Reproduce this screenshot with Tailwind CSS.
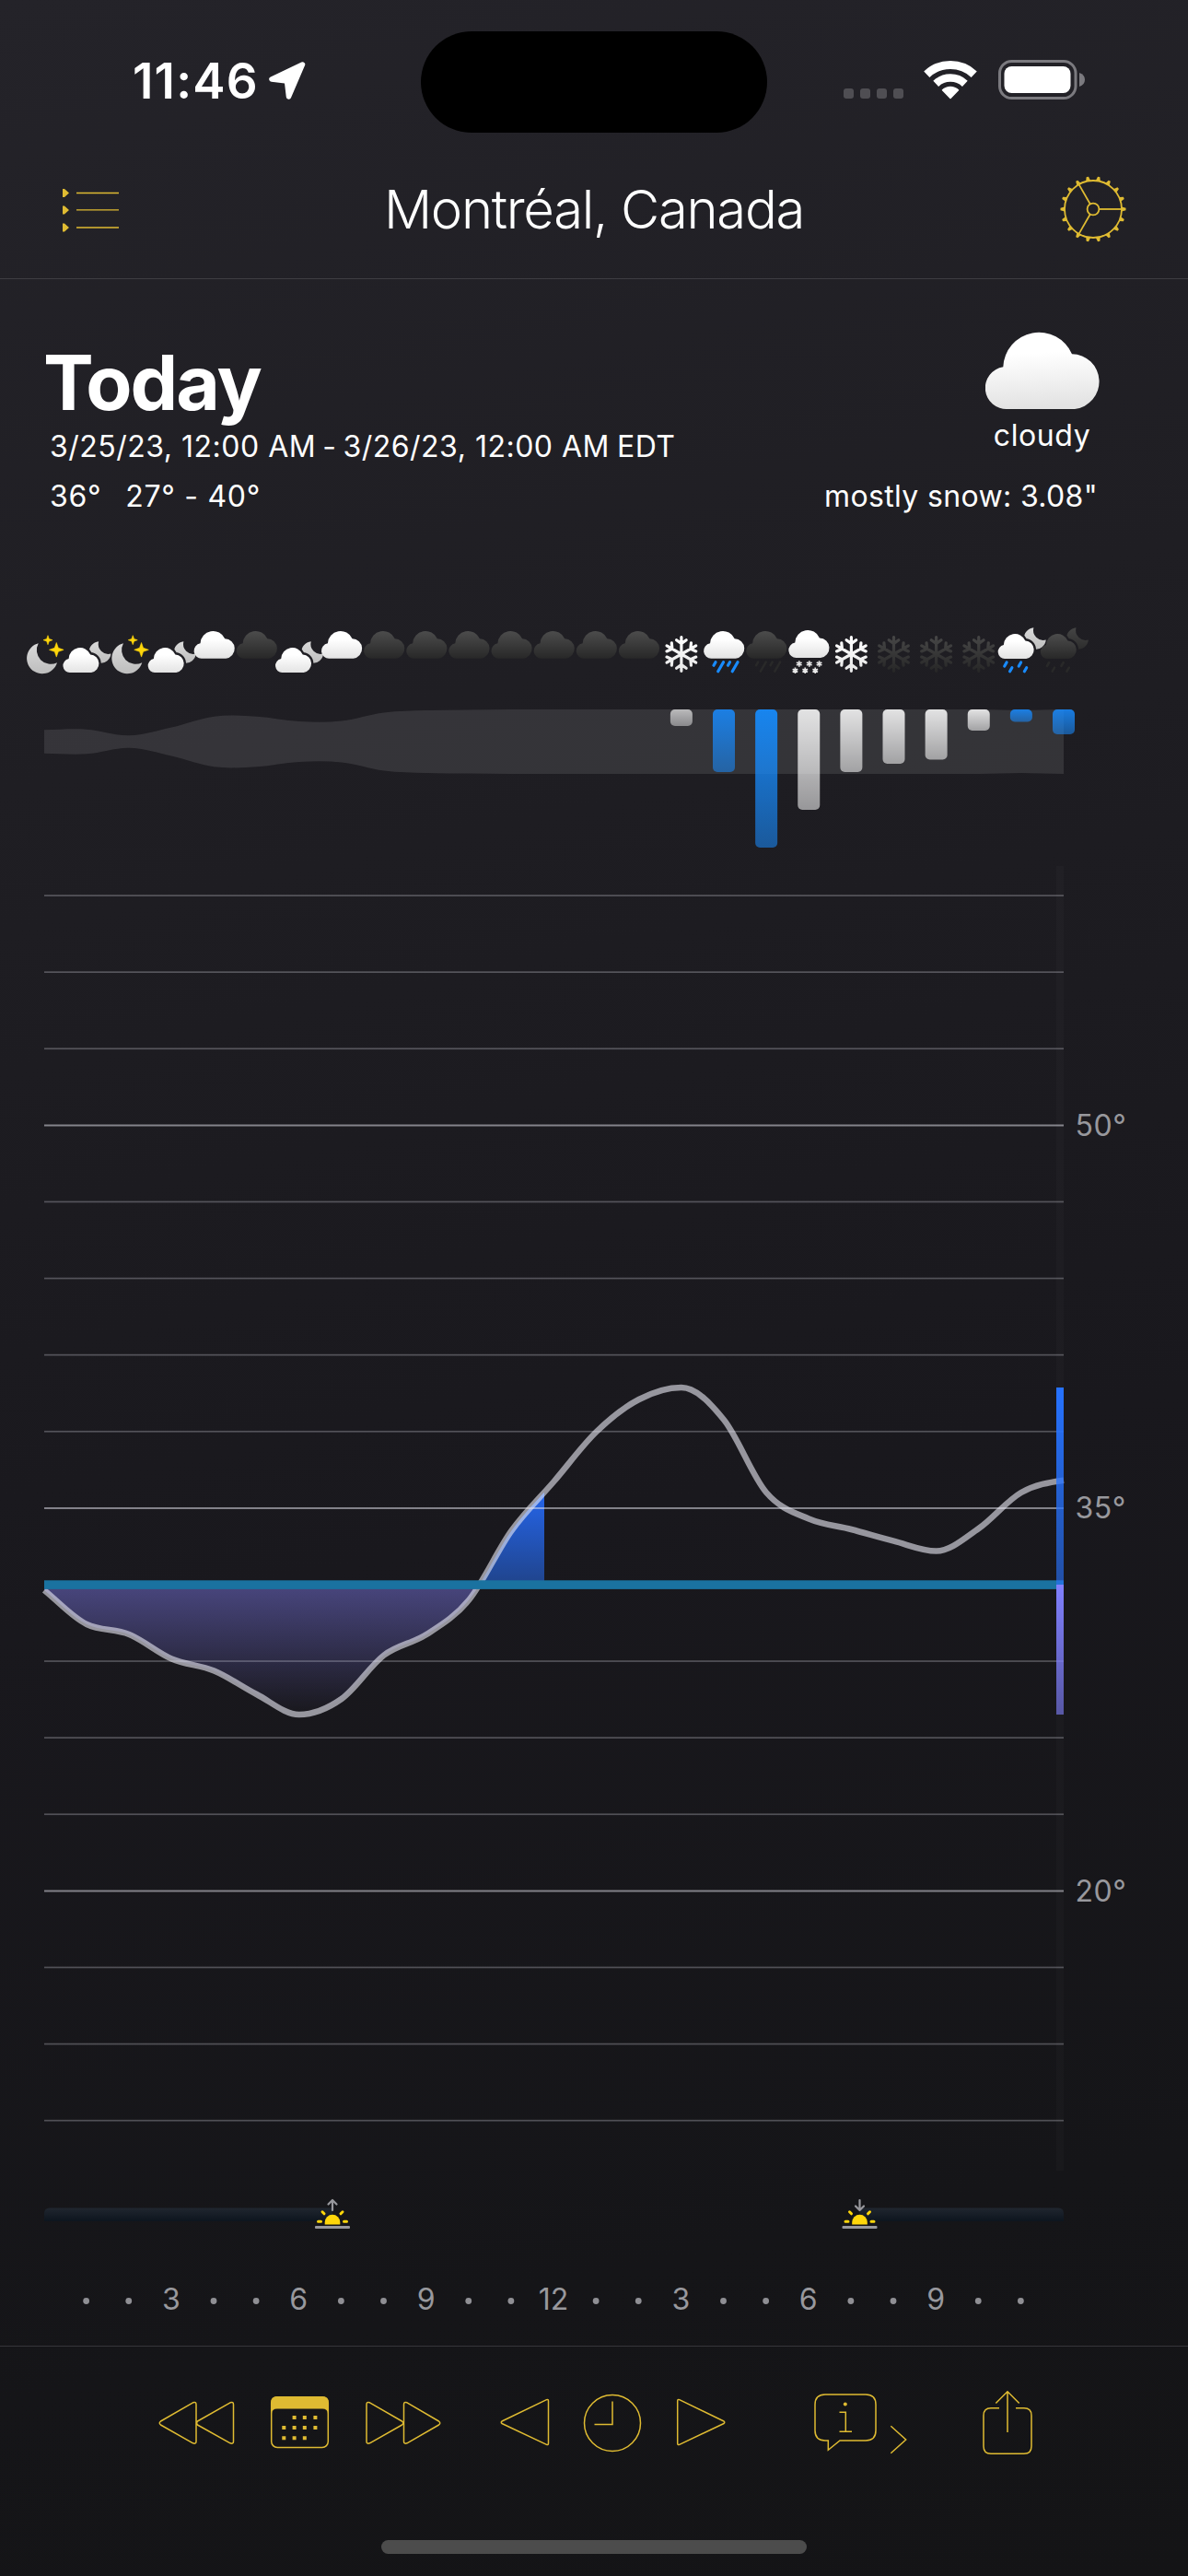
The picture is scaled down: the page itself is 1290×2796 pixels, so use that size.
<!DOCTYPE html>
<html lang="en">
<head>
<meta charset="utf-8">
<title>Montréal, Canada – Forecast</title>
<script src="https://cdn.jsdelivr.net/npm/@tailwindcss/browser@4"></script>
</head>
<body class="bg-[#141417]">
<div class="flex h-[2796px] w-[1290px] flex-col overflow-hidden bg-[linear-gradient(168deg,#242329_0%,#1f1e23_28%,#19181d_58%,#151518_85%,#141416_100%)] font-['Inter',sans-serif] text-white">

  <!-- Status bar -->
  <div class="grid h-[152px] shrink-0 grid-cols-[457px_376px_457px]">
    <div class="flex items-start pt-[58px] pl-[144px]">
      <span class="text-[53px] leading-[60px] font-semibold tracking-[1.200px] whitespace-nowrap">11:46</span>
      <svg class="mt-[8px] ml-[9px] h-[44px] w-[44px]" viewBox="0 0 44 44"><path d="M38.5 4 L5 20 L21.500 22 L23.500 39 Z" fill="#fff" stroke="#fff" stroke-width="5.500" stroke-linejoin="round"/></svg>
    </div>
    <div class="mt-[34px] h-[110px] rounded-full bg-black"></div>
    <div class="flex items-start pt-[65px] pl-[83px]">
      <div class="mt-[31px] flex gap-[7px]">
        <div class="h-[11px] w-[11px] rounded-[3px] bg-[#4f4e53]"></div>
        <div class="h-[11px] w-[11px] rounded-[3px] bg-[#4f4e53]"></div>
        <div class="h-[11px] w-[11px] rounded-[3px] bg-[#4f4e53]"></div>
        <div class="h-[11px] w-[11px] rounded-[3px] bg-[#4f4e53]"></div>
      </div>
      <svg class="ml-[21px] h-[43px] w-[60px]" viewBox="0 0 60 43" fill="none" stroke="#fff">
        <path d="M4.300 15.700 A37.700 37.700 0 0 1 55.700 15.700" stroke-width="9"/>
        <path d="M14.200 25.800 A23.200 23.200 0 0 1 45.800 25.800" stroke-width="8.500"/>
        <path d="M30 41.500 L21.500 32.800 A12.500 12.500 0 0 1 38.500 32.800 Z" fill="#fff" stroke-width="1.500" stroke-linejoin="round"/>
      </svg>
      <svg class="ml-[22px] h-[43px] w-[96px]" viewBox="0 0 96 43">
        <rect x="1.500" y="1.500" width="82.500" height="40" rx="13" fill="none" stroke="#7b7a7f" stroke-width="3"/>
        <rect x="6.500" y="7" width="72" height="29" rx="8" fill="#fff"/>
        <path d="M88 14 Q94 16 94 21.500 Q94 27 88 29 Z" fill="#7b7a7f"/>
      </svg>
    </div>
  </div>

  <!-- Navigation bar -->
  <div class="flex h-[151px] shrink-0 items-center justify-between border-b border-[#3e3d42] pr-[64px] pl-[66px]">
    <svg class="h-[50px] w-[76px]" viewBox="0 0 76 50" fill="#dfbb32">
      <path d="M2 3 H4 L9 7.500 L4 12 H2 Z M2 21.500 H4 L9 26 L4 30.500 H2 Z M2 40.500 H4 L9 45 L4 49.500 H2 Z"/>
      <path d="M17 6.800 H63 V8.200 H17 Z M17 25.200 H63 V26.600 H17 Z M17 44.200 H63 V45.800 H17 Z"/>
    </svg>
    <h1 class="text-[58px] leading-[70px] font-light tracking-[-1.300px] whitespace-nowrap">Montréal, Canada</h1>
    <svg id="gear" class="h-[78px] w-[78px]" viewBox="-39 -39 78 78" fill="none" stroke="#dfbb32" stroke-width="1.800"></svg>
  </div>

  <!-- Day summary -->
  <div class="flex h-[317px] shrink-0 justify-between pr-[98px] pl-[50px]">
    <div class="flex flex-col pt-[68px]">
      <h2 class="-ml-[3px] text-[82px] leading-[90px] font-bold tracking-[-2px]">Today</h2>
      <p class="mt-[4px] ml-[4px] text-[32px] leading-[40px] tracking-[0.500px] whitespace-nowrap">3/25/23, 12:00 AM<span class="mx-[7px]">-</span>3/26/23, 12:00 AM<span class="ml-[8px]">EDT</span></p>
      <p class="mt-[14px] ml-[4px] flex gap-[26px] text-[32px] leading-[40px] tracking-[0.700px]"><span>36°</span><span>27° - 40°</span></p>
    </div>
    <div class="flex flex-col items-end pt-[57px]">
      <div class="-mr-[7px] flex w-[130px] flex-col items-center">
        <svg class="h-[85px] w-[128px]" viewBox="-1 -1 128 85">
          <defs><linearGradient id="bigCloud" x1="0" y1="0" x2="0.08" y2="1"><stop offset="0.3" stop-color="#fff"/><stop offset="1" stop-color="#e3e3e3"/></linearGradient></defs>
          <path d="M23 83 A23 23 0 0 1 18.300 37.300 A39 39 0 0 1 93 23.200 A30 30 0 0 1 96 83 Z" fill="url(#bigCloud)"/>
        </svg>
        <p class="mt-[8px] mr-[5px] text-[32px] leading-[40px] tracking-[0.600px]">cloudy</p>
      </div>
      <p class="mt-[26px] text-[32px] leading-[40px] tracking-[0.350px] whitespace-nowrap">mostly snow: 3.08"</p>
    </div>
  </div>

  <!-- Hourly chart -->
  <svg id="chart" class="h-[1926px] w-[1290px] shrink-0" viewBox="0 620 1290 1926" font-size="32">
    <defs>
      <linearGradient id="cloudLight" x1="0" y1="0" x2="0" y2="1"><stop offset="0.3" stop-color="#fff"/><stop offset="1" stop-color="#e3e3e3"/></linearGradient>
      <linearGradient id="cloudDark" x1="0" y1="0" x2="0" y2="1"><stop offset="0" stop-color="#4c4c4c"/><stop offset="1" stop-color="#282828"/></linearGradient>
      <linearGradient id="moonLight" x1="0" y1="0" x2="0" y2="1"><stop offset="0" stop-color="#dadada"/><stop offset="1" stop-color="#bdbdbd"/></linearGradient>
      <linearGradient id="moonDark" x1="0" y1="0" x2="0" y2="1"><stop offset="0" stop-color="#454545"/><stop offset="1" stop-color="#2c2c2c"/></linearGradient>
      <linearGradient id="flakeLight" gradientUnits="userSpaceOnUse" x1="0" y1="-20" x2="0" y2="20"><stop offset="0" stop-color="#fff"/><stop offset="1" stop-color="#e6e6e6"/></linearGradient>
      <linearGradient id="flakeDark" gradientUnits="userSpaceOnUse" x1="0" y1="-20" x2="0" y2="20"><stop offset="0" stop-color="#474747"/><stop offset="1" stop-color="#262626"/></linearGradient>
      <linearGradient id="barSnow" x1="0" y1="0" x2="0" y2="1"><stop offset="0" stop-color="#fff" stop-opacity="0.86"/><stop offset="1" stop-color="#fff" stop-opacity="0.54"/></linearGradient>
      <linearGradient id="barTrace" x1="0" y1="0" x2="0" y2="1"><stop offset="0" stop-color="#fff" stop-opacity="0.66"/><stop offset="1" stop-color="#fff" stop-opacity="0.42"/></linearGradient>
      <linearGradient id="barRain" x1="0" y1="0" x2="0" y2="1"><stop offset="0" stop-color="#1689f8" stop-opacity="0.95"/><stop offset="1" stop-color="#188bff" stop-opacity="0.55"/></linearGradient>
      <linearGradient id="barDrizzle" x1="0" y1="0" x2="0" y2="1"><stop offset="0" stop-color="#188bff" stop-opacity="0.86"/><stop offset="1" stop-color="#188bff" stop-opacity="0.54"/></linearGradient>
      <linearGradient id="warm" gradientUnits="userSpaceOnUse" x1="0" y1="1506" x2="0" y2="1720"><stop offset="0" stop-color="#2672ff"/><stop offset="1" stop-color="#2672ff" stop-opacity="0.6"/></linearGradient>
      <linearGradient id="cold" gradientUnits="userSpaceOnUse" x1="0" y1="1720" x2="0" y2="1861"><stop offset="0" stop-color="#8080ff"/><stop offset="1" stop-color="#8080ff" stop-opacity="0.6"/></linearGradient>
      <linearGradient id="warmFill" gradientUnits="userSpaceOnUse" x1="0" y1="1620" x2="0" y2="1716"><stop offset="0" stop-color="#2565ea"/><stop offset="1" stop-color="#20458f"/></linearGradient>
      <linearGradient id="coldFill" gradientUnits="userSpaceOnUse" x1="0" y1="1720" x2="0" y2="1861"><stop offset="0" stop-color="#807cf0" stop-opacity="0.46"/><stop offset="1" stop-color="#807cf0" stop-opacity="0"/></linearGradient>
      <linearGradient id="night" x1="0" y1="0" x2="0" y2="1"><stop offset="0" stop-color="#20262f"/><stop offset="1" stop-color="#0d151e"/></linearGradient>
      <mask id="behindCloud" maskUnits="userSpaceOnUse" x="-10" y="-10" width="80" height="70"><rect x="-10" y="-10" width="80" height="70" fill="#fff"/><path transform="translate(0 7) scale(.315 .325)" d="M23 83 A23 23 0 0 1 18.300 37.300 A39 39 0 0 1 93 23.200 A30 30 0 0 1 96 83 Z" fill="#000" stroke="#000" stroke-width="15"/></mask>
      <clipPath id="belowFreezing"><rect x="48" y="1720" width="560" height="160"/></clipPath>
      <clipPath id="aboveFreezing"><rect x="480" y="1500" width="111" height="220"/></clipPath>
    </defs>
  </svg>

  <!-- Toolbar -->
  <div class="flex h-[250px] shrink-0 flex-col items-center border-t border-[#36353a]">
    <div class="flex h-[166px] w-full items-center pl-[171px]">
      <svg class="h-[80px] w-[85px]" viewBox="171 2589 85 80" fill="none" stroke="#dfbb32" stroke-width="1.500" stroke-linejoin="round"><path d="M174.500 2627 L209.500 2606.800 Q213 2605.500 213 2609 V2649 Q213 2652 209.500 2650.800 L174.500 2631 Q172 2629 174.500 2627 Z M214.500 2627 L250 2606.800 Q253.500 2605.500 253.500 2609 V2649 Q253.500 2652 250 2650.800 L214.500 2631 Q212.500 2629 214.500 2627 Z"/></svg>
      <svg class="ml-[36px] h-[80px] w-[67px]" viewBox="292 2589 67 80" fill="#dfbb32"><rect x="294.700" y="2600.700" width="61.600" height="54.800" rx="6.500" fill="none" stroke="#dfbb32" stroke-width="1.500"/><path d="M294 2619 V2607 Q294 2600 301 2600 H350 Q357 2600 357 2607 V2619 H356 Q356 2613.500 350 2613.500 H301 Q295 2613.500 295 2619 Z"/><path d="M317.600 2621 h4 v4 h-4 Z M328.800 2621 h4 v4 h-4 Z M340.400 2621 h4 v4 h-4 Z M306.300 2632 h4 v4 h-4 Z M317.600 2632 h4 v4 h-4 Z M328.800 2632 h4 v4 h-4 Z M340.400 2632 h4 v4 h-4 Z M306.300 2643.200 h4 v4 h-4 Z M317.600 2643.200 h4 v4 h-4 Z M328.800 2643.200 h4 v4 h-4 Z"/></svg>
      <svg class="ml-[36px] h-[80px] w-[86px]" viewBox="395 2589 86 80" fill="none" stroke="#dfbb32" stroke-width="1.500" stroke-linejoin="round"><path d="M436.500 2627 L401.500 2606.800 Q398 2605.500 398 2609 V2649 Q398 2652 401.500 2650.800 L436.500 2631 Q439 2629 436.500 2627 Z M476.500 2627 L442 2606.800 Q438.500 2605.500 438.500 2609 V2649 Q438.500 2652 442 2650.800 L476.500 2631 Q479 2629 476.500 2627 Z"/></svg>
      <svg class="ml-[61px] h-[80px] w-[56px]" viewBox="542 2589 56 80" fill="none" stroke="#dfbb32" stroke-width="1.500" stroke-linejoin="round"><path d="M545 2627 L593.500 2603.600 Q595.500 2603 595.500 2605 V2651 Q595.500 2653 593.500 2652.400 L545 2629.500 Q543.500 2628.200 545 2627 Z"/></svg>
      <svg class="ml-[34px] h-[80px] w-[66px]" viewBox="632 2589 66 80" fill="none" stroke="#dfbb32" stroke-width="1.500"><circle cx="665" cy="2629" r="30.500"/><path d="M665 2605.500 V2630.500 H645.500"/></svg>
      <svg class="ml-[35px] h-[80px] w-[56px]" viewBox="733 2589 56 80" fill="none" stroke="#dfbb32" stroke-width="1.500" stroke-linejoin="round"><path d="M786 2627 L737.700 2603.600 Q735.700 2603 735.700 2605 V2651 Q735.700 2653 737.700 2652.400 L786 2629.500 Q787.500 2628.200 786 2627 Z"/></svg>
      <svg class="ml-[93px] h-[80px] w-[106px]" viewBox="882 2589 106 80" fill="none" stroke="#dfbb32" stroke-width="1.500"><path d="M896 2598 H940 Q951 2598 951 2609 V2637 Q951 2648 940 2648 H912 L899.300 2658.300 V2648 H896 Q885 2648 885 2637 V2609 Q885 2598 896 2598 Z"/><path d="M911.500 2617.300 H918.300 V2638.300 M911.500 2638.300 H925"/><circle cx="917.800" cy="2608.500" r="2" fill="#dfbb32" stroke="none"/><path d="M967.300 2632.300 L983.700 2647 L967.300 2661.800"/></svg>
      <svg class="ml-[77px] h-[80px] w-[58px]" viewBox="1065 2589 58 80" fill="none" stroke="#dfbb32" stroke-width="1.500"><path d="M1085 2612.700 H1076 Q1068 2612.700 1068 2620.700 V2654.300 Q1068 2662.300 1076 2662.300 H1112 Q1120 2662.300 1120 2654.300 V2620.700 Q1120 2612.700 1112 2612.700 H1103 M1094 2639 V2595 M1081.300 2607.500 L1094 2594.800 L1106.700 2607.500"/></svg>
    </div>
    <div class="mt-[44px] h-[15px] w-[462px] rounded-full bg-[#4c4c4c]"></div>
  </div>
</div>

<script type="module">
  // Gear: ring, hub, three spokes and eighteen teeth
  const gear = ['<circle r="31"/><circle r="6.400"/>'];
  for (const a of [0, 120, 240]) gear.push(`<path transform="rotate(${a})" d="M6.400 0 H31"/>`);
  for (let i = 0; i < 18; i++) gear.push(`<path transform="rotate(${i * 20})" d="M31 -2.500 L35.500 -1.200 V1.200 L31 2.500 Z" fill="#dfbb32" stroke="none"/>`);
  document.getElementById('gear').innerHTML = gear.join('');

  const X0 = 48, STEP = 46.125;
  const hx = h => X0 + STEP * h;
  const out = [];

  // Cubic through the hourly samples; monotone keeps extremes at the samples
  function curve(ys, monotone) {
    const n = ys.length, s = [], m = [];
    for (let i = 0; i < n - 1; i++) s.push(ys[i + 1] - ys[i]);
    for (let i = 0; i < n; i++) {
      if (i === 0) m.push(s[0]);
      else if (i === n - 1) m.push(s[n - 2] * 0.5);
      else {
        const a = s[i - 1], b = s[i];
        if (!monotone) m.push((a + b) / 2);
        else m.push(a * b <= 0 ? 0 : Math.sign(a) * Math.min(Math.abs(a + b) / 2, 2 * Math.abs(a), 2 * Math.abs(b)));
      }
    }
    let d = '';
    for (let i = 0; i < n - 1; i++)
      d += `C${hx(i) + STEP / 3} ${ys[i] + m[i] / 3} ${hx(i + 1) - STEP / 3} ${ys[i + 1] - m[i + 1] / 3} ${hx(i + 1)} ${ys[i + 1]}`;
    return d;
  }
  // Same curve walked right to left, for the lower edge of the band
  function reversed(ys) {
    const c = curve(ys, false).slice(1).split('C').map(p => p.split(' ').map(Number));
    let d = '';
    for (let i = c.length - 1; i >= 0; i--) {
      const [ax, ay, bx, by] = c[i];
      d += `C${bx} ${by} ${ax} ${ay} ${hx(i)} ${ys[i]}`;
    }
    return d;
  }

  // Cloud cover band
  const cover = [12.8, 13.3, 6.700, 15.500, 27.300, 27.300, 22, 22.500, 31.500, 34, 34.600, 35, 35, 35, 35, 35, 35, 35, 35, 35, 35, 35, 35, 34, 35];
  const upper = cover.map(v => 805 - v), lower = cover.map(v => 805 + v);
  out.push(`<path d="M${X0} ${upper[0]}${curve(upper, false)}L${hx(24)} ${lower[24]}${reversed(lower)}Z" fill="#fff" fill-opacity="0.1"/>`);

  // Precipitation bars
  const bars = [[15, 18, 'barTrace'], [16, 68, 'barDrizzle'], [17, 150, 'barRain'], [18, 109, 'barSnow'], [19, 68, 'barSnow'], [20, 59, 'barSnow'], [21, 54.500, 'barSnow'], [22, 23, 'barSnow'], [23, 13.500, 'barDrizzle'], [24, 27, 'barDrizzle']];
  for (const [h, len, g] of bars)
    out.push(`<rect x="${hx(h) - 12}" y="770" width="24" height="${len}" rx="5" fill="url(#${g})"/>`);

  // Condition icons
  const CLOUD = 'M23 83 A23 23 0 0 1 18.300 37.300 A39 39 0 0 1 93 23.200 A30 30 0 0 1 96 83 Z';
  const cloud = (x, y, sx, sy, dark) => `<path transform="translate(${x} ${y}) scale(${sx} ${sy})" d="${CLOUD}" fill="url(#${dark ? 'cloudDark' : 'cloudLight'})"/>`;
  const fullCloud = (x, dark) => cloud(x - 22.500, 685, 0.357, 0.357, dark);
  const star = (x, y, r) => {
    const k = r * 0.26;
    return `<path d="M${x} ${y - r}L${x + k} ${y - k}L${x + r} ${y}L${x + k} ${y + k}L${x} ${y + r}L${x - k} ${y + k}L${x - r} ${y}L${x - k} ${y - k}Z" fill="#ffd60a" stroke="#ffd60a" stroke-width="0.600" stroke-linejoin="round"/>`;
  };
  const drops = (list, color, w) => list.map(([x, y, l]) => `<path d="M${x} ${y}L${x - l * 0.580} ${y + l}" stroke="${color}" stroke-width="${w}" stroke-linecap="round"/>`).join('');
  const moonCloud = (x, y, dark) => `<g transform="translate(${x - 26.300} ${y})"><g mask="url(#behindCloud)"><path transform="translate(27.500 0)" d="M10.800 0.200 A12 12 0 1 0 24.200 13.400 A10.800 10.800 0 0 1 10.800 0.200 Z" fill="url(#${dark ? 'moonDark' : 'moonLight'})"/></g>${cloud(0, 7, 0.315, 0.325, dark)}</g>`;
  const flake = (x, y, dark) => {
    let d = '';
    for (let i = 0; i < 6; i++) {
      const t = i * Math.PI / 3, p = (a, b) => `${(a * Math.cos(t) - b * Math.sin(t)).toFixed(2)} ${(a * Math.sin(t) + b * Math.cos(t)).toFixed(2)}`;
      d += `M0 0L${p(0.01, -18.300)}M${p(-5.300, -15.300)}L${p(0, -11.500)}L${p(5.300, -15.300)}`;
    }
    return `<g transform="translate(${x} ${y})"><path d="${d}" fill="none" stroke-width="3.200" stroke-linecap="round" stroke="url(#${dark ? 'flakeDark' : 'flakeLight'})"/></g>`;
  };
  const tinyFlake = (x, y) => `<path d="M${x} ${y - 3.200}V${y + 3.200}M${x - 2.800} ${y - 1.600}L${x + 2.800} ${y + 1.600}M${x - 2.800} ${y + 1.600}L${x + 2.800} ${y - 1.600}" stroke="#e8e8e8" stroke-width="1.700"/>`;
  const heavy = x => [[x - 10, 718.700, 3.500], [x - 1.500, 718.700, 10], [x + 5.500, 718.700, 3.500], [x + 14, 718.700, 10]];
  const light = x => [[x - 16.800, 719, 4], [x - 1.300, 719, 4], [x - 11, 724.700, 4], [x + 4.800, 724.700, 4]];
  const icons = {
    moon: x => `<path transform="translate(${x - 20} 698)" d="M12.700 0.200 A16.800 16.800 0 1 0 33 21.200 A15.300 15.300 0 0 1 12.700 0.200 Z" fill="url(#moonLight)"/>` + star(x + 3, 694.700, 5) + star(x + 12.300, 705.300, 7.800),
    moonCloud: x => moonCloud(x, 696, false),
    cloud: x => fullCloud(x, false),
    darkCloud: x => fullCloud(x, true),
    flake: x => flake(x - 1, 710, false),
    darkFlake: x => flake(x - 1, 710, true),
    rain: x => fullCloud(x, false) + drops(heavy(x), '#188bff', 3.200),
    darkRain: x => fullCloud(x, true) + drops(heavy(x), '#292929', 2.600),
    snow: x => cloud(x - 22.500, 684, 0.357, 0.362, false) + [[-11.500, 720.500], [-0.500, 720.500], [10.300, 720.500], [-15.800, 727.800], [-5, 727.800], [6, 727.800]].map(([a, b]) => tinyFlake(x + a, b)).join(''),
    night: x => moonCloud(x + 0.500, 681, false) + drops(light(x), '#188bff', 3.200),
    darkNight: x => moonCloud(x + 0.500, 681, true) + drops(light(x), '#292929', 2.600)
  };
  const hours = ['moon', 'moonCloud', 'moon', 'moonCloud', 'cloud', 'darkCloud', 'moonCloud', 'cloud', 'darkCloud', 'darkCloud', 'darkCloud', 'darkCloud', 'darkCloud', 'darkCloud', 'darkCloud', 'flake', 'rain', 'darkRain', 'snow', 'flake', 'darkFlake', 'darkFlake', 'darkFlake', 'night', 'darkNight'];
  hours.forEach((k, i) => out.push(icons[k](hx(i) + 1)));

  // Temperature area
  const temps = [1726, 1763, 1774, 1800.500, 1813.500, 1839, 1861, 1844, 1796.500, 1774, 1736.500, 1661.500, 1608, 1554, 1519, 1506, 1541, 1620, 1648.500, 1660, 1672.700, 1683.500, 1659, 1620, 1606.700];
  const line = `M${X0} ${temps[0]}${curve(temps, true)}`;
  out.push(`<path d="${line}L1155 1720H48Z" fill="url(#coldFill)" clip-path="url(#belowFreezing)"/>`);
  out.push(`<path d="${line}L1155 1720H48Z" fill="url(#warmFill)" clip-path="url(#aboveFreezing)"/>`);

  // Grid: one line every three degrees
  for (let k = 0; k < 17; k++) {
    if (k === 9) continue;
    const y = 972.200 + 83.100 * k, major = k % 5 === 3;
    out.push(`<rect x="48" y="${y - 1}" width="1107" height="${major ? 2 : 1.700}" fill="#ebebf5" fill-opacity="${major ? 0.5 : 0.28}"/>`);
  }
  out.push(`<path d="${line}" fill="none" stroke="#ebebf5" stroke-opacity="0.6" stroke-width="6.500"/>`);
  out.push('<rect x="48" y="1715.300" width="1107" height="9.600" fill="#1a72a0"/>');

  // Range strip
  out.push('<rect x="1147" y="940" width="8" height="1416" fill="#fff" fill-opacity="0.02"/>');
  out.push('<rect x="1147" y="1506" width="8" height="214" fill="url(#warm)"/><rect x="1147" y="1720" width="8" height="141" fill="url(#cold)"/>');
  for (const [t, y] of [[50, 1232.500], [35, 1648], [20, 2063.500]])
    out.push(`<text x="1167.500" y="${y}" fill="#98989d" letter-spacing="0.500">${t}°</text>`);

  // Night segments with sunrise and sunset markers
  out.push('<path d="M54 2396.500H361V2411H48V2402.500Q48 2396.500 54 2396.500Z" fill="url(#night)"/><path d="M1149 2396.500H933.500V2411H1155V2402.500Q1155 2396.500 1149 2396.500Z" fill="url(#night)"/>');
  const sun = (x, arrow) => `<path d="M${x - 8.300} 2414.500V2412A8.300 8.300 0 0 1 ${x + 8.300} 2412V2414.500Z" fill="#ffd60a"/><path d="M${x - 15.500} 2411.300h3M${x + 12.500} 2411.300h3M${x - 11} 2400.800l2 2M${x + 11} 2400.800l-2 2" stroke="#ffd60a" stroke-width="3" stroke-linecap="round"/><rect x="${x - 19}" y="2416" width="38" height="3" rx="1" fill="#98989d"/><path d="${arrow}" fill="none" stroke="#98989d" stroke-width="2.200" stroke-linecap="round" stroke-linejoin="round"/>`;
  out.push(sun(361, 'M361 2399V2388.500M356.500 2392.500L361 2388L365.500 2392.500'));
  out.push(sun(933.500, 'M933.500 2388V2398.500M929 2394.500L933.500 2399L938 2394.500'));

  // Hour axis
  for (let h = 1; h < 24; h++)
    out.push(h % 3 ? `<circle cx="${hx(h) - 0.500}" cy="2497.500" r="3.400" fill="#8f8f94"/>` : `<text x="${hx(h) - 0.500}" y="2507" text-anchor="middle" fill="#98989d">${h > 12 ? h - 12 : h}</text>`);

  document.getElementById('chart').insertAdjacentHTML('beforeend', out.join(''));
</script>
</body>
</html>
